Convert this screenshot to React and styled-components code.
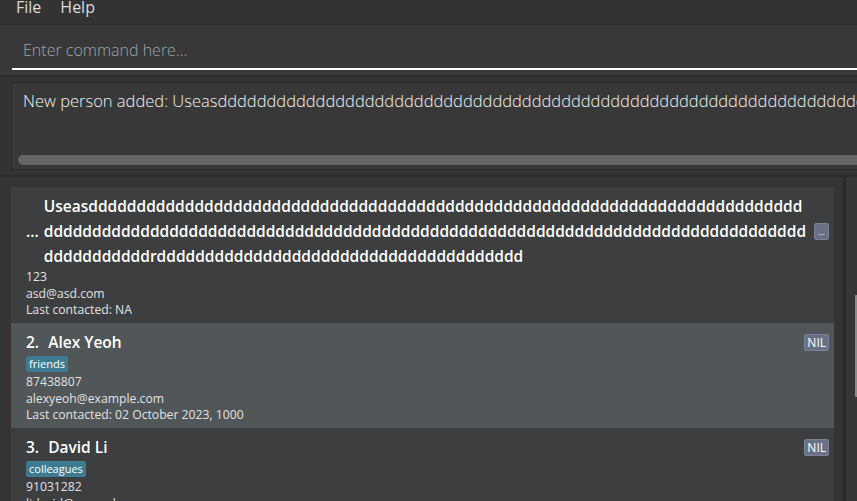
import React from "react";
import styled, { createGlobalStyle } from "styled-components";

const GlobalStyle = createGlobalStyle`
  html, body { margin: 0; padding: 0; background: #333333; overflow: hidden; }
  body { font-family: "Open Sans", "Noto Sans", sans-serif; }
  * { box-sizing: border-box; }
`;

const Root = styled.div`
  width: 857px;
  height: 501px;
  overflow: hidden;
  display: flex;
  flex-direction: column;
  background: #333333;
`;

const MenuBar = styled.div`
  height: 25px;
  flex: none;
  display: flex;
  align-items: flex-start;
  gap: 19px;
  padding-left: 16px;
  background: #333333;
  border-bottom: 1px solid #2a2a2a;
`;

const MenuItem = styled.span`
  font-size: 16px;
  line-height: 15px;
  color: #dcdcdc;
`;

const CommandPane = styled.div`
  height: 52px;
  flex: none;
  background: #383838;
  padding: 0 0 0 12px;
  border-bottom: 2px solid #2b2b2b;
  display: flex;
  flex-direction: column;
`;

const CommandInput = styled.input`
  margin-right: -20px;
  height: 45px;
  border: none;
  border-bottom: 2px solid #ffffff;
  background: transparent;
  padding: 6px 0 0 11px;
  font-family: "Open Sans", sans-serif;
  font-weight: 300;
  font-size: 16px;
  color: #ffffff;
  outline: none;
  &::placeholder { color: #9ea4aa; }
`;

const ResultPane = styled.div`
  height: 100px;
  flex: none;
  background: #333333;
  padding: 5px 0 5px 11px;
  border-bottom: 2px solid #2b2b2b;
  display: flex;
`;

const ResultBox = styled.div`
  flex: 1;
  margin-right: -20px;
  border: 1px solid #2b2b2b;
  background: #383838;
  display: flex;
  flex-direction: column;
  justify-content: space-between;
  padding: 6px 0 4px 6px;
  overflow: hidden;
`;

const ResultText = styled.div`
  padding-left: 5px;
  white-space: nowrap;
  font-weight: 300;
  font-size: 16.5px;
  line-height: 24px;
  color: #f2f2f2;
`;

const HScroll = styled.div`
  height: 10px;
  border-radius: 5px;
  background: #666666;
`;

const ListPane = styled.div`
  flex: 1;
  min-height: 0;
  display: flex;
  background: #343434;
`;

const ListColumn = styled.div`
  width: 843px;
  flex: none;
  padding: 10px 9px 0 11px;
  display: flex;
  flex-direction: column;
  overflow: hidden;
`;

const Divider = styled.div`
  width: 3px;
  flex: none;
  background: #2a2a2a;
`;

const SideTrack = styled.div`
  flex: 1;
  background: #363636;
  display: flex;
  justify-content: flex-end;
  align-items: flex-start;
`;

const Thumb = styled.div`
  width: 2px;
  height: 102px;
  margin-top: 118px;
  background: #8a8a8a;
`;

const Card = styled.div`
  flex: none;
  background: ${(p) => (p.$odd ? "#515658" : "#3c3e40")};
  padding: 7px 5px 4.5px 15px;
  display: flex;
  flex-direction: column;
  align-items: flex-start;
`;

const NameRow = styled.div`
  align-self: stretch;
  display: flex;
  align-items: center;
  gap: 5px;
`;

const IdLabel = styled.span`
  flex: none;
  white-space: pre;
  font-weight: 600;
  font-size: 15.5px;
  line-height: 25px;
  color: #ffffff;
`;

const NameLabel = styled.span`
  flex: 1;
  min-width: 0;
  word-break: break-all;
  font-weight: 600;
  font-size: 15.5px;
  line-height: 25px;
  color: #ffffff;
`;

const Badge = styled.span`
  flex: none;
  height: 17px;
  min-width: 15px;
  padding: 0 2px;
  border-radius: 2px;
  background: #6a7184;
  border: 1px solid #7a8194;
  color: #ffffff;
  font-size: ${(p) => (p.$tiny ? "8px" : "12px")};
  line-height: 15px;
  text-align: center;
`;

const Tags = styled.div`
  display: flex;
  gap: 4px;
  margin: 1px 0 2px;
`;

const Tag = styled.span`
  height: 16px;
  padding: 0 3px;
  border-radius: 2px;
  background: #3e7b91;
  color: #ffffff;
  font-size: 11px;
  line-height: 16px;
`;

const Detail = styled.div`
  font-size: 12.2px;
  line-height: 16.5px;
  color: #e2e2e2;
  white-space: nowrap;
`;

const longName = "Useas" + "d".repeat(164) + "r" + "d".repeat(38);

const persons = [
  {
    id: "...",
    name: longName,
    badge: "...",
    tiny: true,
    tags: [],
    phone: "123",
    email: "asd@asd.com",
    last: "NA",
  },
  {
    id: "2. ",
    name: "Alex Yeoh",
    badge: "NIL",
    tags: ["friends"],
    phone: "87438807",
    email: "alexyeoh@example.com",
    last: "02 October 2023, 1000",
  },
  {
    id: "3. ",
    name: "David Li",
    badge: "NIL",
    tags: ["colleagues"],
    phone: "91031282",
    email: "lidavid@example.com",
    last: "03 October 2023, 1200",
  },
];

export default function App() {
  return (
    <>
      <GlobalStyle />
      <Root>
        <MenuBar>
          <MenuItem>File</MenuItem>
          <MenuItem>Help</MenuItem>
        </MenuBar>
        <CommandPane>
          <CommandInput placeholder="Enter command here..." />
        </CommandPane>
        <ResultPane>
          <ResultBox>
            <ResultText>New person added: {longName}</ResultText>
            <HScroll />
          </ResultBox>
        </ResultPane>
        <ListPane>
          <ListColumn>
            {persons.map((p, i) => (
              <Card key={i} $odd={i % 2 === 1}>
                <NameRow>
                  <IdLabel>{p.id}</IdLabel>
                  <NameLabel>{p.name}</NameLabel>
                  <Badge $tiny={p.tiny}>{p.badge}</Badge>
                </NameRow>
                {p.tags.length > 0 && (
                  <Tags>
                    {p.tags.map((t) => (
                      <Tag key={t}>{t}</Tag>
                    ))}
                  </Tags>
                )}
                <Detail>{p.phone}</Detail>
                <Detail>{p.email}</Detail>
                <Detail>Last contacted: {p.last}</Detail>
              </Card>
            ))}
          </ListColumn>
          <Divider />
          <SideTrack>
            <Thumb />
          </SideTrack>
        </ListPane>
      </Root>
    </>
  );
}
